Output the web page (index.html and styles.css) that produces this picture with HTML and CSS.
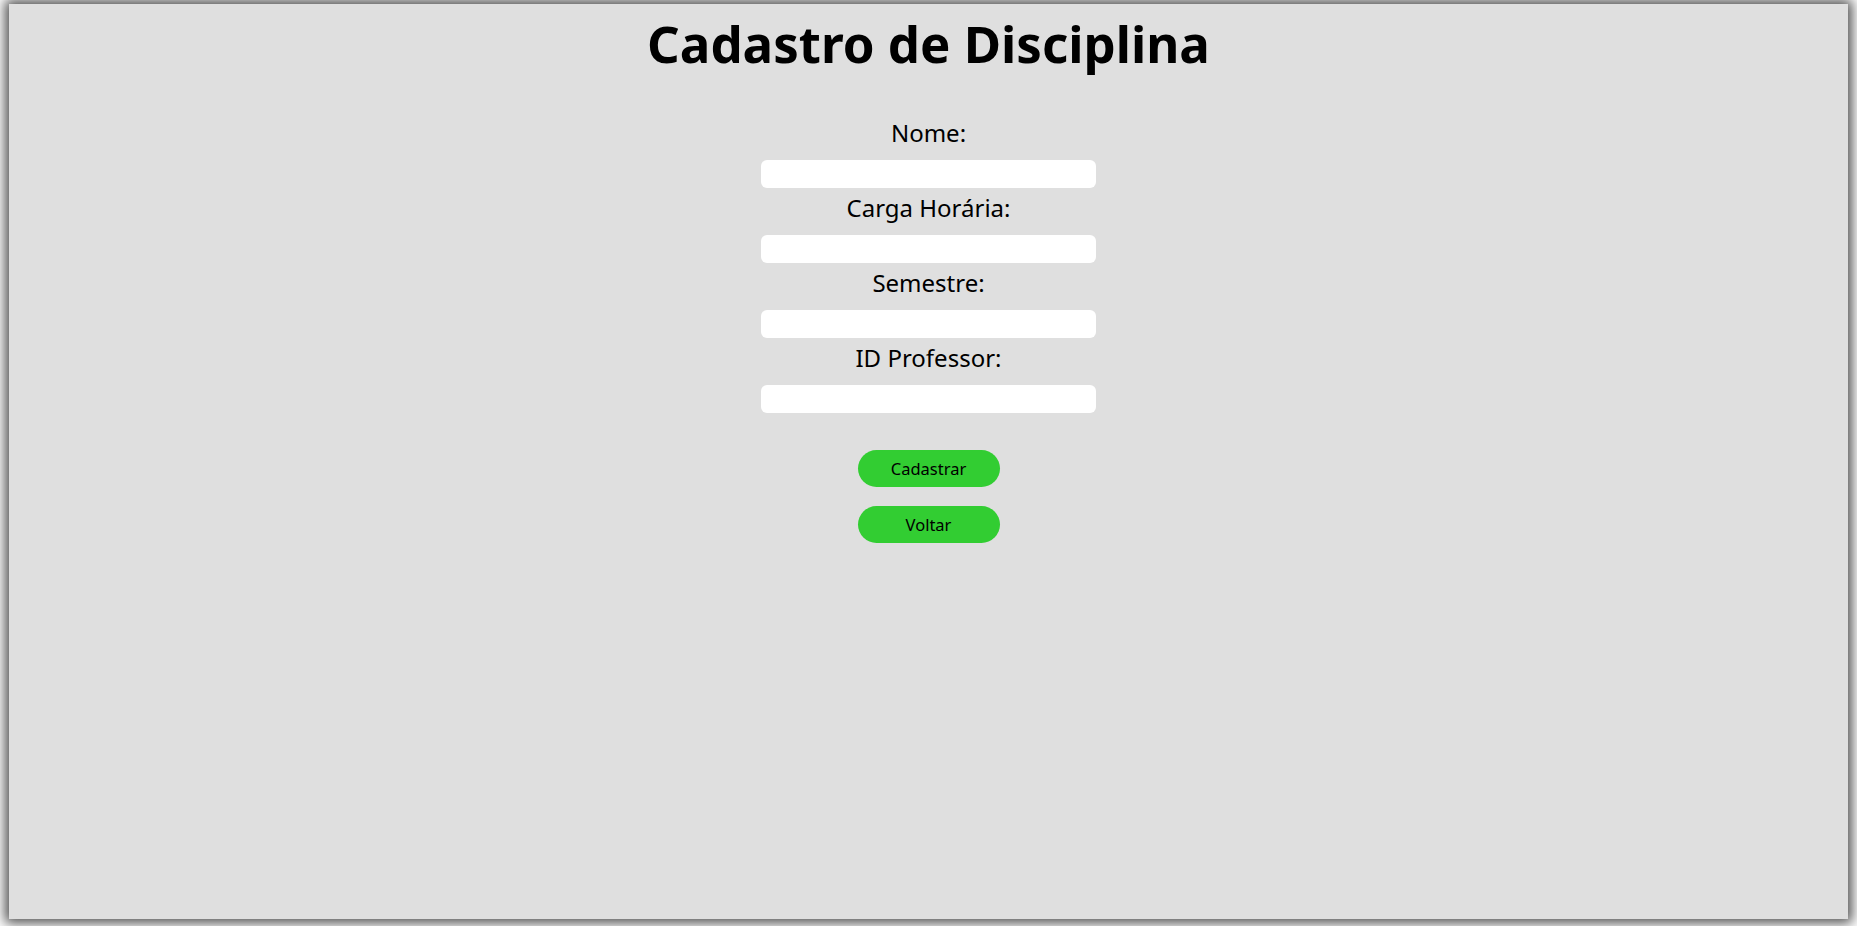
FILE: index.html
```html
<!DOCTYPE html>
<html lang="pt-BR">
<head>
<meta charset="utf-8">
<title>Cadastro de Disciplina</title>
<link rel="stylesheet" href="styles.css">
</head>
<body>
<div class="page">
  <h1 class="title">Cadastro de Disciplina</h1>
  <form class="form">
    <label class="field-label" for="nome">Nome:</label>
    <input class="field-input" id="nome" type="text">
    <label class="field-label" for="carga">Carga Horária:</label>
    <input class="field-input" id="carga" type="text">
    <label class="field-label" for="semestre">Semestre:</label>
    <input class="field-input" id="semestre" type="text">
    <label class="field-label" for="prof">ID Professor:</label>
    <input class="field-input" id="prof" type="text">
    <div class="actions">
      <button class="btn" type="button">Cadastrar</button>
      <button class="btn" type="button">Voltar</button>
    </div>
  </form>
</div>
</body>
</html>
```
FILE: styles.css
```css
html {
  background: #ffffff;
}
body {
  margin: 0;
  padding: 4px 9px 7px;
  font-family: "Comic Sans MS", "Noto Sans", sans-serif;
  color: #000;
}
.page {
  height: 915px;
  box-sizing: border-box;
  background: #dfdfdf;
  box-shadow: 0 0 12px 4px rgba(0, 0, 0, 0.7);
  display: flex;
  flex-direction: column;
  align-items: center;
}
.title {
  margin: 9px 0 0;
  font-size: 51px;
  line-height: 1.2;
  font-weight: 700;
}
.form {
  margin-top: 41px;
  display: flex;
  flex-direction: column;
  align-items: center;
}
.field-label {
  font-size: 24px;
  line-height: 36px;
  margin-bottom: 9px;
}
.field-input {
  width: 335px;
  height: 28px;
  box-sizing: border-box;
  border: none;
  border-radius: 6px;
  background: #fff;
  margin: 0 0 2px;
  padding: 0 8px;
}
.actions {
  margin-top: 35px;
  display: flex;
  flex-direction: column;
  align-items: center;
  gap: 19px;
}
.btn {
  width: 142px;
  height: 37px;
  border: none;
  border-radius: 19px;
  background: #32cd32;
  color: #000;
  font-family: "Comic Sans MS", "Noto Sans", sans-serif;
  font-size: 16.5px;
  padding: 0;
}
```
